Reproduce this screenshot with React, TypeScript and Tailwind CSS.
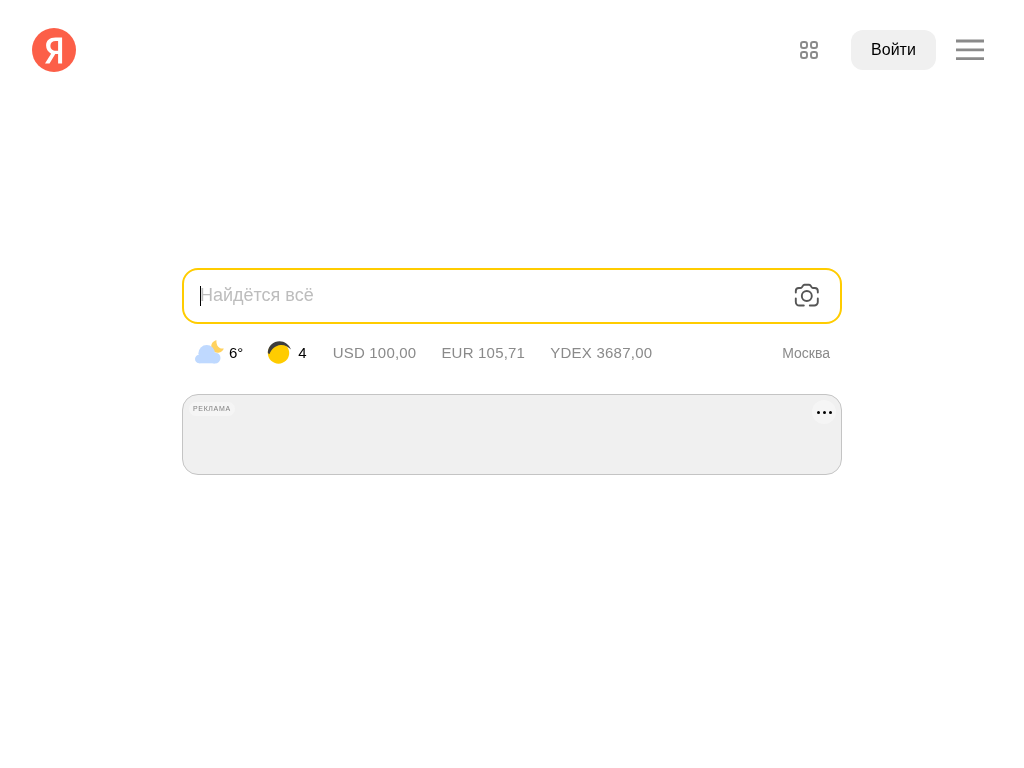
export default function App() {
  return (
    <div className="h-[768px] w-full flex flex-col will-change-transform font-['Liberation_Sans',Arial,sans-serif]">
      <header className="flex items-center h-[100px] pl-[32px] pr-[40px]">
        <svg width="44" height="44" viewBox="0 0 44 44">
          <circle cx="22" cy="22" r="22" fill="#FC5F48" />
          <path fillRule="evenodd" d="M26.100 35.500h4V9.500h-6.500c-6.200 0-9.500 3.200-9.500 8 0 3.800 1.800 6 5 8.200L13 35.500h4.500l5.800-9.500h2.800zM26.100 22.700h-2.200c-3.200 0-5.500-1.500-5.500-5 0-3.100 2-4.800 5.500-4.800h2.200z" fill="#fff" />
        </svg>
        <div className="ml-auto flex items-center">
          <svg width="18" height="18" viewBox="0 0 18 18" fill="none" stroke="#8a8a8a" strokeWidth="1.900" className="mr-[33px]">
            <rect x="1" y="1" width="6" height="6" rx="2.300" />
            <rect x="11" y="1" width="6" height="6" rx="2.300" />
            <rect x="1" y="11" width="6" height="6" rx="2.300" />
            <rect x="11" y="11" width="6" height="6" rx="2.300" />
          </svg>
          <button className="h-[40px] w-[85px] rounded-[12px] bg-[#f0f0f0] text-[16px] text-black">Войти</button>
          <svg width="28" height="22" viewBox="0 0 28 22" fill="none" stroke="#8a8a8a" strokeWidth="2.800" className="ml-[20px]">
            <path d="M0 2h28M0 10.800h28M0 19.600h28" />
          </svg>
        </div>
      </header>
      <main className="mx-auto mt-[168px] w-[660px]">
        <div className="flex h-[56px] items-center rounded-[16px] border-2 border-[#FFCC00] pl-[16px] pr-[20px]">
          <div className="h-[20px] w-px bg-black" />
          <span className="-ml-px -mt-px text-[18px] text-[#bdbdbd]">Найдётся всё</span>
          <svg className="ml-auto" width="26" height="26" viewBox="0 0 26 26" fill="none" stroke="#555" strokeWidth="1.900" strokeLinecap="round">
            <g transform="translate(-0.200 0)">
              <circle cx="13" cy="13" r="5" />
              <path d="M2 9.500V8a3 3 0 0 1 3-3h1.500a2 2 0 0 0 1.600-.8l1-1.500a2 2 0 0 1 1.600-1h4.600a2 2 0 0 1 1.600 1l1 1.500a2 2 0 0 0 1.600.8H21a3 3 0 0 1 3 3v1.500" />
              <path d="M2 15.500v3.500a3.500 3.500 0 0 0 3.500 3.500H10" />
              <path d="M24 15.500v3.500a3.500 3.500 0 0 1-3.500 3.500H16" />
            </g>
          </svg>
        </div>
        <div className="mt-[14px] flex h-[30px] items-center pl-[12px] pr-[12px] text-[15px]">
          <svg width="30" height="26" viewBox="0 0 30 26" className="mr-[5px]">
            <path d="M22.500.3C19 1 16.500 4 17.500 8 18.500 11.500 22 13.500 25.500 12.500 27.500 12 29 10.500 29.800 8.500 27 9 24.500 7.800 23.300 5.500 22.500 3.700 22.300 2 22.500.3z" fill="#FFD25F" />
            <g fill="#BFD9FF">
              <circle cx="12.700" cy="13.300" r="8.300" />
              <circle cx="21" cy="18" r="5.500" />
              <circle cx="5.300" cy="19" r="4.300" />
              <rect x="5.300" y="17" width="15.700" height="6.300" />
            </g>
          </svg>
          <span className="text-black">6°</span>
          <svg width="24" height="24" viewBox="0 0 24 24" className="ml-[24px] mr-[7px]">
            <circle cx="11.500" cy="12" r="10.700" fill="#FFCC00" />
            <path d="M.8 11C1.500 4.500 6.500.3 12.500.3 17.500.3 22 3.500 24 8.500 21 5.500 17 3.500 13.500 4 8.500 4.500 4.500 8 2.500 13 1.500 13.300.8 12 .8 11z" fill="#3d3d3d" />
          </svg>
          <span className="text-black">4</span>
          <span className="ml-[26px] tracking-[0.2px] text-[#8a8a8a]">USD 100,00</span>
          <span className="ml-[25px] tracking-[0.2px] text-[#8a8a8a]">EUR 105,71</span>
          <span className="ml-[25px] tracking-[0.25px] text-[#8a8a8a]">YDEX 3687,00</span>
          <span className="ml-auto text-[14px] text-[#8a8a8a]">Москва</span>
        </div>
        <div className="relative mt-[26px] h-[81px] rounded-[16px] border border-[#c4c4c4] bg-[#f0f0f0]">
          <span className="absolute left-[6px] top-[7px] rounded-[8px] bg-[#f5f5f5] px-[4px] text-[7px] font-normal leading-[14px] tracking-[0.65px] text-[#808080]">РЕКЛАМА</span>
          <div className="absolute right-[5px] top-[5px] flex h-[24px] w-[24px] items-center justify-center gap-[3px] rounded-full bg-[#f5f5f5]">
            <div className="h-[3px] w-[3px] rounded-full bg-black" />
            <div className="h-[3px] w-[3px] rounded-full bg-black" />
            <div className="h-[3px] w-[3px] rounded-full bg-black" />
          </div>
        </div>
      </main>
    </div>
  );
}
